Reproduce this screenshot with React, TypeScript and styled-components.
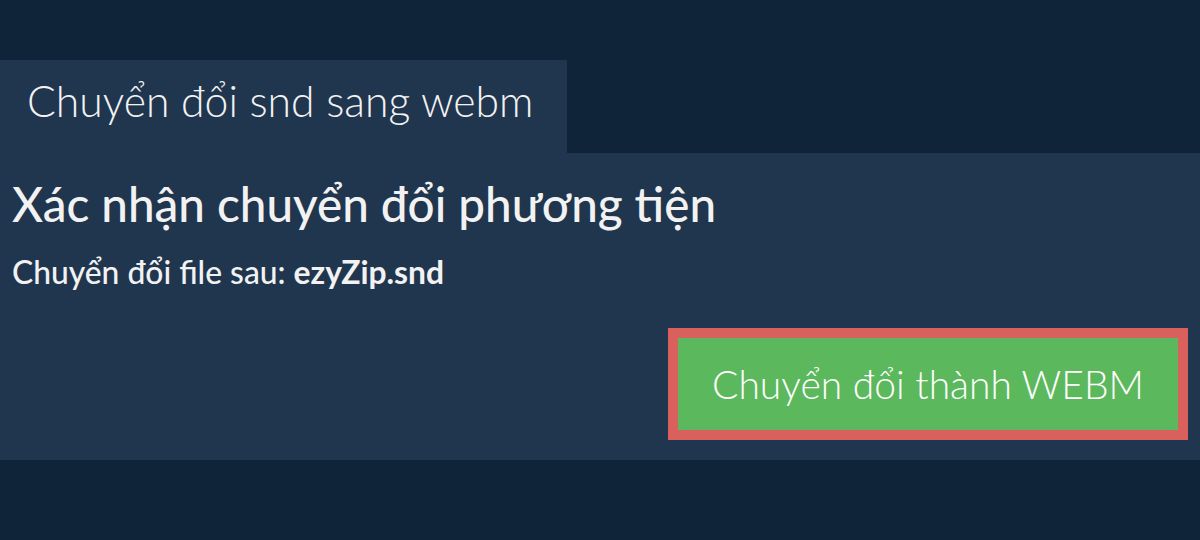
import React from "react";
import styled, { createGlobalStyle } from "styled-components";

const Global = createGlobalStyle`
  html, body { margin: 0; padding: 0; background: #0f2339; }
  body { font-family: Lato, "Open Sans", sans-serif; color: #f2f2f2; }
`;

const Page = styled.div`
  width: 1200px;
  height: 540px;
  background: #0f2339;
  padding-top: 60px;
  box-sizing: border-box;
`;

const Tab = styled.div`
  display: inline-block;
  width: 567px;
  height: 93px;
  box-sizing: border-box;
  background: #20364f;
  padding: 17px 0 0 27px;
  font-size: 42.7px;
  font-weight: 300;
  line-height: 48px;
  color: #f2f2f2;
  vertical-align: top;
`;

const Panel = styled.div`
  background: #20364f;
  height: 307px;
  box-sizing: border-box;
  padding: 22px 12px 0 12px;
  display: flex;
  flex-direction: column;
`;

const Heading = styled.h1`
  margin: 0;
  font-size: 47.6px;
  font-weight: 500;
  line-height: 58px;
  color: #f2f2f2;
`;

const FileLine = styled.p`
  margin: 20px 0 0;
  font-size: 31.8px;
  font-weight: 500;
  line-height: 38px;
  color: #f2f2f2;
  b { font-weight: 700; }
`;

const Actions = styled.div`
  display: flex;
  justify-content: flex-end;
  margin-top: 37px;
`;

const ConvertButton = styled.button`
  box-sizing: border-box;
  width: 520px;
  height: 112px;
  background: #5cb85c;
  border: 10px solid #d9605c;
  color: #ffffff;
  font-family: Lato, sans-serif;
  font-size: 39px;
  font-weight: 300;
  cursor: pointer;
`;

export default function App() {
  return (
    <>
      <Global />
      <Page>
        <Tab>Chuyển đổi snd sang webm</Tab>
        <Panel>
          <Heading>Xác nhận chuyển đổi phương tiện</Heading>
          <FileLine>
            Chuyển đổi file sau: <b>ezyZip.snd</b>
          </FileLine>
          <Actions>
            <ConvertButton>Chuyển đổi thành WEBM</ConvertButton>
          </Actions>
        </Panel>
      </Page>
    </>
  );
}
